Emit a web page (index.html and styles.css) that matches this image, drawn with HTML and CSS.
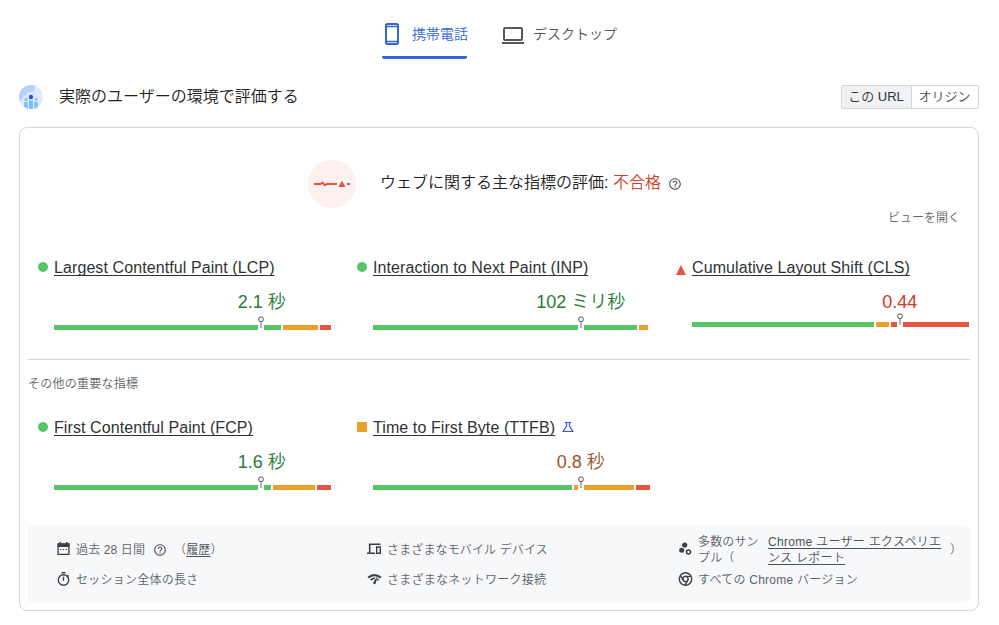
FILE: index.html
```
<!DOCTYPE html>
<html lang="ja">
<head>
  <meta charset="UTF-8">
  <meta name="viewport" content="width=device-width, initial-scale=1.0">
  <title>実際のユーザーの環境で評価する</title>
  <link rel="stylesheet" href="styles.css">
</head>
<body>
  <nav class="tabs">
    <a class="tab active">
      <svg width="20" height="24" viewBox="0 0 20 24"><rect x="4" y="2" width="12" height="20" rx="1.5" fill="none" stroke="currentColor" stroke-width="2"/><path d="M4 4.5h12M4 19.5h12" stroke="currentColor" stroke-width="1.6"/></svg>
      <span>携帯電話</span>
    </a>
    <a class="tab">
      <svg width="22" height="24" viewBox="0 0 22 24"><rect x="2" y="6" width="18" height="12" rx="1" fill="none" stroke="currentColor" stroke-width="2"/><path d="M0 21h22" stroke="currentColor" stroke-width="2"/></svg>
      <span>デスクトップ</span>
    </a>
  </nav>

  <header class="section-header">
    <svg class="globe" width="24" height="24" viewBox="0 0 24 24">
      <defs><clipPath id="round"><circle cx="12" cy="12" r="12"/></clipPath></defs>
      <g clip-path="url(#round)">
        <rect width="24" height="24" fill="#dce9fe"/>
        <path d="M0 0h16l-1 3 1 2-3 2-4 0-2 3-3 2-1 3-3 1z" fill="#b5d1fb"/>
        <path d="M22 5l2 1v7l-2-1z" fill="#eaf2ff"/>
        <g fill="#7cc0f8"><circle cx="7" cy="14.5" r="1.5"/><circle cx="17" cy="14.5" r="1.5"/><path d="M5.200 17h3.600v7H5.200zM10 15.500h4V24h-4zM15.200 17h3.600v7h-3.600z"/></g>
        <circle cx="12" cy="12" r="2.200" fill="#2b50e2"/>
      </g>
    </svg>
    <h1>実際のユーザーの環境で評価する</h1>
    <div class="toggle">
      <button class="selected">この URL</button><button>オリジン</button>
    </div>
  </header>

  <main class="card">
    <div class="assessment">
      <svg width="48" height="48" viewBox="0 0 48 48">
        <circle cx="24" cy="24" r="24" fill="#fdf0ee"/>
        <path d="M6 24h6.500l2-1.500 2.500 2.800 2-1.300h10M39 24h3" fill="none" stroke="#e9513f" stroke-width="2"/>
        <circle cx="34" cy="24" r="5" fill="#fff"/>
        <path d="M34 20.700l3.600 6.300h-7.200z" fill="#e9513f"/>
      </svg>
      <p>ウェブに関する主な指標の評価: <span class="failed">不合格</span></p>
      <svg class="help" width="14" height="14" viewBox="0 0 24 24" fill="currentColor"><path d="M11 18h2v-2h-2v2zm1-16C6.480 2 2 6.480 2 12s4.480 10 10 10 10-4.480 10-10S17.520 2 12 2zm0 18c-4.410 0-8-3.590-8-8s3.590-8 8-8 8 3.590 8 8-3.590 8-8 8zm0-14c-2.210 0-4 1.790-4 4h2c0-1.100.9-2 2-2s2 .9 2 2c0 2-3 1.750-3 5h2c0-2.250 3-2.500 3-5 0-2.210-1.790-4-4-4z"/></svg>
    </div>
    <a class="expand">ビューを開く</a>

    <section class="metrics core">
      <div class="metric good">
        <div class="name"><i class="mark"></i><a>Largest Contentful Paint (LCP)</a></div>
        <div class="value">2.1 秒</div>
        <div class="bar">
          <b style="flex-grow: 227"></b><b style="flex-grow: 35"></b><b style="flex-grow: 11"></b>
          <svg class="pin" width="6" height="14" viewBox="0 0 6 14"><use href="#pin"/></svg>
        </div>
      </div>
      <div class="metric good">
        <div class="name"><i class="mark"></i><a>Interaction to Next Paint (INP)</a></div>
        <div class="value">102 ミリ秒</div>
        <div class="bar">
          <b style="flex-grow: 264"></b><b style="flex-grow: 9"></b><b style="flex-grow: 0"></b>
          <svg class="pin" width="6" height="14" viewBox="0 0 6 14"><use href="#pin"/></svg>
        </div>
      </div>
      <div class="metric poor">
        <div class="name"><i class="mark"></i><a>Cumulative Layout Shift (CLS)</a></div>
        <div class="value">0.44</div>
        <div class="bar">
          <b style="flex-grow: 182"></b><b style="flex-grow: 13"></b><b style="flex-grow: 78"></b>
          <svg class="pin" width="6" height="14" viewBox="0 0 6 14"><use href="#pin"/></svg>
        </div>
      </div>
    </section>

    <h2>その他の重要な指標</h2>

    <section class="metrics">
      <div class="metric good">
        <div class="name"><i class="mark"></i><a>First Contentful Paint (FCP)</a></div>
        <div class="value">1.6 秒</div>
        <div class="bar">
          <b style="flex-grow: 217"></b><b style="flex-grow: 42"></b><b style="flex-grow: 14"></b>
          <svg class="pin" width="6" height="14" viewBox="0 0 6 14"><use href="#pin"/></svg>
        </div>
      </div>
      <div class="metric average">
        <div class="name"><i class="mark"></i><a>Time to First Byte (TTFB)</a>
          <svg class="flask" width="12" height="12" viewBox="0 0 12 12"><path d="M3 1.500h6M4.500 1.500v3.500L1.200 10.500h9.600L7.500 5V1.500" fill="none" stroke="currentColor" stroke-width="1.200"/></svg>
        </div>
        <div class="value">0.8 秒</div>
        <div class="bar">
          <b style="flex-grow: 199"></b><b style="flex-grow: 60"></b><b style="flex-grow: 14"></b>
          <svg class="pin" width="6" height="14" viewBox="0 0 6 14"><use href="#pin"/></svg>
        </div>
      </div>
    </section>

    <ul class="details">
      <li>
        <svg width="14" height="14" viewBox="0 0 14 14"><path d="M1.600 2h10.800v10.400H1.600z" fill="none" stroke="currentColor" stroke-width="1.300"/><path d="M1 1.500h12V5H1zM3 0h1.500v2H3zM9.500 0H11v2H9.500z" fill="currentColor"/><path d="M3.500 7.500h1.300M6.300 7.500h1.300M9.200 7.500h1.300" stroke="currentColor"/></svg>
        <span>過去 28 日間</span>
        <svg class="help" width="14" height="14" viewBox="0 0 24 24" fill="currentColor"><path d="M11 18h2v-2h-2v2zm1-16C6.480 2 2 6.480 2 12s4.480 10 10 10 10-4.480 10-10S17.520 2 12 2zm0 18c-4.410 0-8-3.590-8-8s3.590-8 8-8 8 3.590 8 8-3.590 8-8 8zm0-14c-2.210 0-4 1.790-4 4h2c0-1.100.9-2 2-2s2 .9 2 2c0 2-3 1.750-3 5h2c0-2.250 3-2.500 3-5 0-2.210-1.790-4-4-4z"/></svg>
        <span class="history">（<a>履歴</a>）</span>
      </li>
      <li>
        <svg width="15" height="14" viewBox="0 0 15 14"><path d="M13.500 2.200H2.700v8.300M0 11.300h8" fill="none" stroke="currentColor" stroke-width="1.600"/><path d="M9.700 5h3.600v6.300H9.700z" fill="none" stroke="currentColor" stroke-width="1.400"/></svg>
        <span>さまざまなモバイル デバイス</span>
      </li>
      <li>
        <svg width="14" height="14" viewBox="0 0 14 14"><circle cx="6.200" cy="3" r="2.600" fill="currentColor"/><circle cx="3.200" cy="8.200" r="2.500" fill="currentColor"/><circle cx="10" cy="10" r="2" fill="none" stroke="currentColor" stroke-width="1.500"/></svg>
        <span class="samples">多数のサンプル（</span>
        <a class="report">Chrome ユーザー エクスペリエンス レポート</a>
        <span>）</span>
      </li>
      <li>
        <svg width="14" height="14" viewBox="0 0 14 14"><circle cx="7" cy="8" r="5.200" fill="none" stroke="currentColor" stroke-width="1.400"/><path d="M5 .7h4M7 4.700v4M11 3.200l1.200 1.200" stroke="currentColor" stroke-width="1.400"/></svg>
        <span class="wide">セッション全体の長さ</span>
      </li>
      <li>
        <svg width="15" height="14" viewBox="0 0 15 14"><path d="M.5 4.800Q7.500-1 14.500 4.800L13 6.400Q7.500 2 2 6.400z" fill="currentColor"/><path d="M3 7.500Q5.500 5.200 8.300 5.500L7.800 7Q6 7 4.500 8.800zM10.600 6.300l1.500 1.200-1.500 1.500-.7-.8z" fill="currentColor"/><path d="M10.500 4L8.800 11.300Q8 12.800 6.700 12 5.700 11 6.500 10z" fill="currentColor"/></svg>
        <span class="wide">さまざまなネットワーク接続</span>
      </li>
      <li>
        <svg width="14" height="14" viewBox="0 0 14 14" fill="none" stroke="currentColor" stroke-width="1.400"><circle cx="7" cy="7" r="6.200"/><circle cx="7" cy="7" r="2.600"/><path d="M7 4.400h5.700M4.750 8.300L1.900 3.400M9.250 8.300L6.400 13.200"/></svg>
        <span class="wide">すべての Chrome バージョン</span>
      </li>
    </ul>
  </main>

  <svg class="symbols" width="0" height="0">
    <symbol id="pin" viewBox="0 0 6 14">
      <path d="M0 8h6v6H0z" fill="#fff"/>
      <path d="M3 6v6" stroke="#8d9a90" stroke-width="1.400"/>
      <circle cx="3" cy="3.300" r="2.400" fill="#fff" stroke="#3c4043" stroke-width=".9"/>
    </symbol>
  </svg>
</body>
</html>
```
FILE: styles.css
```
* {
  box-sizing: border-box;
}

body {
  margin: 0;
  padding: 11px 20px 0 19px;
  background: #fff;
  color: #212121;
  font-family: "Liberation Sans", "Noto Sans CJK JP", sans-serif;
  font-weight: 350;
  font-size: 12px;
}

h1, h2, p, ul {
  margin: 0;
  padding: 0;
  font-weight: 350;
}

svg {
  display: block;
  flex: none;
}

.symbols {
  position: absolute;
}

/* tabs */
.tabs {
  display: flex;
  gap: 35px;
  padding-left: 363px;
}
.tab {
  display: flex;
  align-items: center;
  height: 48px;
  color: #55585c;
  font-size: 14px;
  border-bottom: 3px solid transparent;
}
.tab span {
  margin-left: 9px;
  line-height: 20px;
}
.tab.active {
  width: 85px;
  background: linear-gradient(#3367d6, #3367d6) bottom / 100% 3px no-repeat border-box;
  border-radius: 2px;
  color: #3367d6;
  white-space: nowrap;
}
.tab.active span {
  margin-left: 10px;
}

/* heading row */
.section-header {
  display: flex;
  align-items: center;
  height: 24px;
  margin-top: 26px;
}
.section-header h1 {
  margin: 0 0 1px 16px;
  font-size: 16px;
  line-height: 24px;
}
.toggle {
  display: flex;
  width: 138px;
  height: 24px;
  margin-left: auto;
  border: 1px solid #d3d5da;
  border-radius: 2px;
}
.toggle button {
  flex: 1;
  padding: 0 1px 0 0;
  border: none;
  background: #fff;
  color: #4d5054;
  font: inherit;
  font-size: 13px;
  line-height: 22px;
}
.toggle .selected {
  flex: 0 0 70px;
  border-right: 1px solid #d3d5da;
  background: #eff1f3;
  color: #303236;
}

/* card */
.card {
  height: 484px;
  margin-top: 18px;
  padding: 32px 8px 8px;
  border: 1px solid #d3d5da;
  border-radius: 8px;
}
.assessment {
  display: flex;
  align-items: center;
  height: 48px;
  padding-left: 280px;
}
.assessment p {
  margin: 0 7px 2px 24px;
  font-size: 16px;
  line-height: 24px;
}
.failed {
  color: #d23f28;
}
.help {
  color: #55585c;
}
.expand {
  display: block;
  height: 18px;
  padding: 1px 10px 0 0;
  color: #5f6368;
  line-height: 18px;
  text-align: right;
}

/* metrics */
.metrics {
  display: grid;
  grid-template-columns: repeat(3, 303px);
  gap: 16px;
}
.core {
  height: 134px;
  padding-top: 32px;
  border-bottom: 1px solid #d3d5da;
}
.metric {
  padding-left: 26px;
}
.name {
  display: flex;
  align-items: center;
  height: 20px;
  margin-left: -16px;
  color: #303236;
  font-size: 16px;
  letter-spacing: .09px;
}
.name a {
  text-decoration: underline;
  text-underline-offset: 2px;
  text-decoration-thickness: 1px;
  text-decoration-skip-ink: none;
  line-height: 20px;
}
.mark {
  width: 10px;
  height: 10px;
  margin: 0 6px 2px 0;
}
.good .mark {
  border-radius: 50%;
  background: #57c565;
}
.average .mark {
  background: #ed9f2c;
}
.poor .mark {
  margin-top: 6px;
  background: #e9543f;
  clip-path: polygon(50% 0, 100% 100%, 0 100%);
}
.flask {
  margin: 0 0 2px 7px;
  color: #3056f0;
}
.value {
  width: 50%;
  height: 24px;
  margin: 12px 0 0 50%;
  font-size: 18px;
  line-height: 24px;
  text-align: center;
  white-space: nowrap;
}
.good .value {
  color: #2c7a37;
}
.average .value {
  color: #955629;
}
.poor .value {
  color: #d13721;
}
.bar {
  position: relative;
  display: flex;
  gap: 2px;
  height: 5px;
  margin-top: 11px;
}
.poor .bar {
  margin-top: 8px;
}
.bar b {
  flex-basis: 0;
  background: #57c565;
}
.bar b:nth-child(2) {
  background: #ed9f2c;
}
.bar b:nth-child(3) {
  background: #e9543f;
}
.pin {
  position: absolute;
  top: -9px;
  left: 75%;
  margin-left: -3.75px;
}
.metric:not(:first-child) .pin {
  margin-left: -2.75px;
}

h2 {
  height: 58px;
  padding-top: 15px;
  color: #5f6368;
  font-size: 12px;
  letter-spacing: .25px;
  line-height: 18px;
}

/* collection details */
.details {
  display: grid;
  grid-template-columns: repeat(3, 311px);
  grid-template-rows: 30px 30px;
  height: 76px;
  margin-top: 36px;
  padding: 8px 0 0 29px;
  border-radius: 4px;
  background: #f7f8fa;
  color: #5f6368;
  letter-spacing: .13px;
  list-style: none;
}
.details li {
  display: flex;
  align-items: center;
  padding-top: 2px;
  line-height: 16px;
}
.details li > svg:first-child {
  width: 15px;
  margin: 0 4px 3px -1px;
  color: #3c4043;
}
.details li > svg + span {
  margin-left: 1px;
}
.details .help {
  margin-left: 8px;
}
.details a {
  color: #4d5054;
  text-decoration: underline;
  text-underline-offset: 2px;
  text-decoration-skip-ink: none;
}
.details .history {
  margin-left: 7px;
}
.wide {
  letter-spacing: .25px;
}
.samples {
  width: 62px;
}
.report {
  width: 176px;
  margin: 0 6px 0 8px;
  letter-spacing: .3px;
}
```
